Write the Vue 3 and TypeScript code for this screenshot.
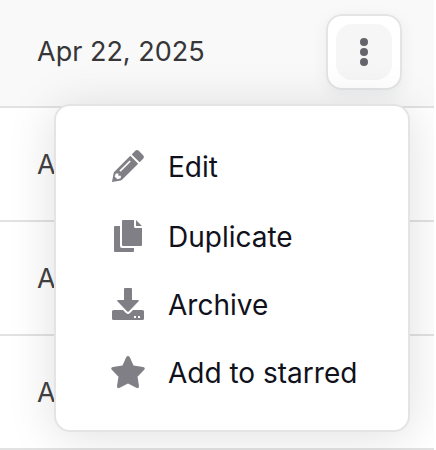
<script setup lang="ts">
import { ref } from 'vue'

interface Action {
  id: string
  label: string
  path: string
}

const actions: Action[] = [
  {
    id: 'edit',
    label: 'Edit',
    path: 'M23 1.1Q25-.9 27 1.1L30.9 5Q32.9 7 30.9 9L27.6 12.3L19.7 4.4ZM18.3 5.8L26.2 13.7L10.3 29.6Q9.7 30.2 8.8 30.4L0 32L1.6 23.2Q1.8 22.3 2.4 21.7ZM17.600 10.400L7.400 20.600L8.600 21.800L18.800 11.600ZM3.800 23.600L2.600 26.400L5.400 29.200L8.600 28.200L9 25.800H6.400V23.400Z',
  },
  {
    id: 'duplicate',
    label: 'Duplicate',
    path: 'M11 0H22V6.500Q22 8 23.500 8H30V25Q30 26 29 26H11Q10 26 10 25V1Q10 0 11 0ZM24 0L30 6H24ZM3 6H8V26Q8 28 10 28H22V31Q22 32 21 32H3Q2 32 2 31V7Q2 6 3 6Z',
  },
  {
    id: 'archive',
    label: 'Archive',
    path: 'M13 0H19Q20 0 20 1V12H26Q27.600 12 26.600 13.300L17 23.200Q16 24.200 15 23.200L5.400 13.300Q4.400 12 6 12H12V1Q12 0 13 0ZM1.500 22H11L14 25Q16 27 18 25L21 22H30.500Q32 22 32 23.500V30.500Q32 32 30.500 32H1.500Q0 32 0 30.500V23.500Q0 22 1.500 22ZM22 28V30H24V28ZM26 28V30H28V28Z',
  },
  {
    id: 'star',
    label: 'Add to starred',
    path: 'M14.300 1Q16-1 17.700 1L21.500 9.500L31 11Q34 11.700 32 14L25.500 20.700L27 30Q27.200 33 24.300 31.800L16 27.400L7.700 31.800Q4.800 33 5 30L6.500 20.700L0 14Q-2 11.700 1 11L10.500 9.500Z',
  },
]

const dates: string[] = ['Apr 22, 2025', 'Apr 21', 'Apr 20', 'Apr 19']
const open = ref(true)
</script>

<template>
  <main class="list">
    <div v-for="(date, index) in dates" :key="date" class="row" :class="{ active: index === 0 }">
      <time class="date">{{ date }}</time>
      <div v-if="index === 0" class="actions">
        <button class="trigger" type="button" aria-label="More actions" :aria-expanded="open" @click="open = !open">
          <span class="face">
            <svg width="8" height="28" viewBox="0 0 8 28" aria-hidden="true">
              <circle cx="4" cy="4" r="4" />
              <circle cx="4" cy="14" r="4" />
              <circle cx="4" cy="24" r="4" />
            </svg>
          </span>
        </button>
        <div v-if="open" class="menu" role="menu">
          <button v-for="action in actions" :key="action.id" class="item" type="button" role="menuitem">
            <svg class="icon" viewBox="0 0 32 32" aria-hidden="true">
              <path :d="action.path" fill-rule="evenodd" />
            </svg>
            <span class="label">{{ action.label }}</span>
          </button>
        </div>
      </div>
    </div>
  </main>
</template>

<style>
body {
  background: #fff;
}
</style>

<style scoped>
.list {
  margin-right: 2px;
  overflow: hidden;
  font-family: Inter, "Liberation Sans", sans-serif;
  font-size: 27px;
  line-height: 36px;
}
.row {
  display: flex;
  align-items: center;
  justify-content: space-between;
  box-sizing: border-box;
  height: 114px;
  padding: 2px 32px 0 37px;
  border-bottom: 2px solid #e2e2e2;
}
.active {
  height: 108px;
  padding-top: 0;
  padding-bottom: 2px;
  background: #f9f9f9;
}
.date {
  color: #424244;
}
.active .date {
  color: #363638;
}
.actions {
  position: relative;
}
.trigger {
  display: block;
  padding: 8px;
  border: 2px solid #e4e4e5;
  border-radius: 16px;
  background: #fff;
  box-shadow: 0 4px 16px rgba(40, 50, 80, 0.07);
}
.face {
  display: grid;
  place-items: center;
  width: 56px;
  height: 56px;
  border-radius: 16px;
  background: #f6f6f6;
  fill: #65646b;
}
.menu {
  position: absolute;
  top: calc(100% + 14px);
  right: -8px;
  display: flex;
  flex-direction: column;
  box-sizing: border-box;
  width: 356px;
  padding: 26px 0 24px;
  border: 2px solid #e4e4e4;
  border-radius: 16px;
  background: #fff;
  box-shadow: 0 4px 48px rgba(0, 0, 0, 0.13);
}
.item {
  display: flex;
  align-items: center;
  gap: 24px;
  height: 68px;
  padding: 0 32px 0 56px;
  border: 0;
  background: none;
  color: #11111b;
  font: inherit;
  font-size: 28px;
  text-align: left;
  white-space: nowrap;
}
.item:first-child {
  margin-bottom: 2px;
}
.label {
  padding-top: 2px;
}
.icon {
  flex: none;
  width: 32px;
  height: 32px;
  overflow: visible;
  fill: #807f86;
}
</style>
